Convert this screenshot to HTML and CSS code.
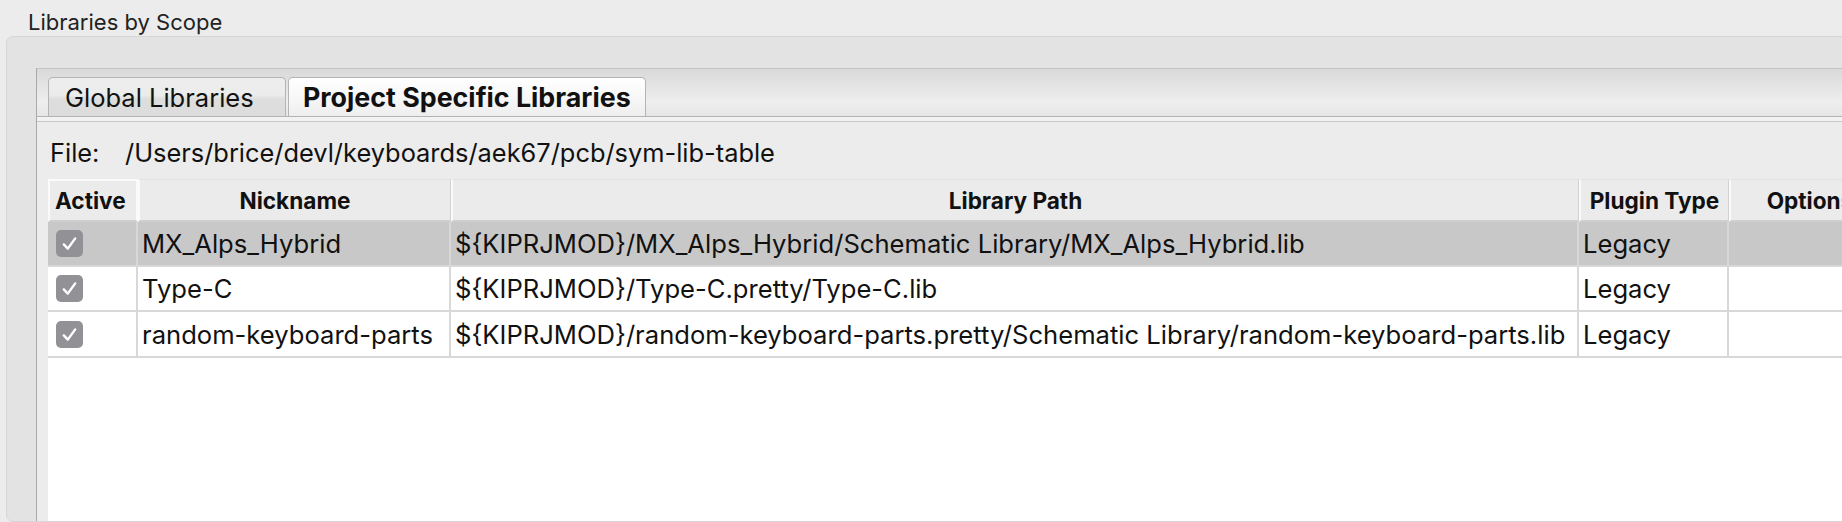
FILE: index.html
```html
<!DOCTYPE html>
<html>
<head>
<meta charset="utf-8">
<link rel="stylesheet" href="styles.css">
</head>
<body>
<div class="window">
  <div class="scope-label">Libraries by Scope</div>
  <div class="groupbox">
    <div class="notebook">
      <div class="tabstrip">
        <div class="tab tab-inactive">Global Libraries</div>
        <div class="tab tab-active">Project Specific Libraries</div>
      </div>
      <div class="tabline"></div>
      <div class="filebar">
        <span class="file-label">File:</span>
        <span class="file-path">/Users/brice/devl/keyboards/aek67/pcb/sym-lib-table</span>
      </div>
      <div class="grid">
        <div class="hcell hcell-active">Active</div>
        <div class="hcell">Nickname</div>
        <div class="hcell">Library Path</div>
        <div class="hcell">Plugin Type</div>
        <div class="hcell hcell-options">Options</div>

        <div class="cell cell-check selected"><span class="checkbox"><svg viewBox="0 0 27 27" width="27" height="27"><path d="M7.8 14.4 L11.8 18.6 L19.2 8.4" fill="none" stroke="#fff" stroke-width="2.4" stroke-linecap="round" stroke-linejoin="round"/></svg></span></div>
        <div class="cell selected">MX_Alps_Hybrid</div>
        <div class="cell selected">${KIPRJMOD}/MX_Alps_Hybrid/Schematic Library/MX_Alps_Hybrid.lib</div>
        <div class="cell selected">Legacy</div>
        <div class="cell selected"></div>

        <div class="cell cell-check"><span class="checkbox"><svg viewBox="0 0 27 27" width="27" height="27"><path d="M7.8 14.4 L11.8 18.6 L19.2 8.4" fill="none" stroke="#fff" stroke-width="2.4" stroke-linecap="round" stroke-linejoin="round"/></svg></span></div>
        <div class="cell">Type-C</div>
        <div class="cell">${KIPRJMOD}/Type-C.pretty/Type-C.lib</div>
        <div class="cell">Legacy</div>
        <div class="cell"></div>

        <div class="cell cell-check"><span class="checkbox"><svg viewBox="0 0 27 27" width="27" height="27"><path d="M7.8 14.4 L11.8 18.6 L19.2 8.4" fill="none" stroke="#fff" stroke-width="2.4" stroke-linecap="round" stroke-linejoin="round"/></svg></span></div>
        <div class="cell">random-keyboard-parts</div>
        <div class="cell">${KIPRJMOD}/random-keyboard-parts.pretty/Schematic Library/random-keyboard-parts.lib</div>
        <div class="cell">Legacy</div>
        <div class="cell"></div>
      </div>
    </div>
  </div>
</div>
</body>
</html>
```
FILE: styles.css
```css
html, body {
  margin: 0;
  padding: 0;
}
body {
  background: #ececec;
  font-family: Inter, "Liberation Sans", sans-serif;
  color: #111;
}
.window {
  width: 1842px;
  height: 522px;
  overflow: hidden;
  display: flex;
  flex-direction: column;
}
.scope-label {
  height: 36px;
  box-sizing: border-box;
  padding: 8px 0 0 28px;
  font-size: 22px;
  line-height: 28px;
  color: #222;
}
.groupbox {
  flex: 1;
  margin-left: 6px;
  width: 1900px;
  box-sizing: border-box;
  border: 1px solid #d6d6d6;
  border-radius: 7px;
  background: #e3e3e3;
  padding: 31px 0 0 29px;
  display: flex;
  flex-direction: column;
}
.notebook {
  flex: 1;
  border-left: 1px solid #a9a9a9;
  border-top: 1px solid #c4c4c4;
  background: #ececec;
  display: flex;
  flex-direction: column;
}
.tabstrip {
  height: 47px;
  box-sizing: border-box;
  background: linear-gradient(#d9d9d9, #eeeeee 70%, #e6e6e6);
  display: flex;
  align-items: flex-end;
  padding-left: 11px;
}
.tab {
  box-sizing: border-box;
  border: 1px solid #b4b4b4;
  border-bottom: none;
  border-radius: 5px 5px 0 0;
  display: flex;
  align-items: center;
  color: #111;
}
.tab-inactive {
  width: 238px;
  height: 39px;
  padding-left: 16px;
  font-size: 25.5px;
  background: linear-gradient(#ededed 0%, #ececec 45%, #dedede 55%, #dcdcdc 100%);
}
.tab-active {
  width: 358px;
  height: 39px;
  margin-left: 2px;
  padding-left: 14px;
  font-size: 26.8px;
  font-weight: 700;
  background: linear-gradient(#ffffff, #f6f6f6 60%, #eeeeee);
}
.tabline {
  height: 6px;
  box-sizing: border-box;
  border-top: 1px solid #b4b4b4;
  border-bottom: 1px solid #c8c8c8;
  background: #f2f2f2;
}
.filebar {
  height: 57px;
  display: flex;
  align-items: center;
  padding: 3px 0 0 13px;
  box-sizing: border-box;
  font-size: 25.4px;
  color: #111;
}
.file-label {
  width: 75px;
}
.grid {
  flex: 1;
  margin-left: 11px;
  background: #fff;
  display: grid;
  grid-template-columns: 90px 313px 1128px 150px 161px;
  grid-template-rows: 43px 45px 45px 46px;
  align-content: start;
}
.hcell {
  box-sizing: border-box;
  background: #ebebeb;
  border-left: 2px solid #fafafa;
  border-right: 1px solid #d2d2d2;
  border-top: 1px solid #e2e2e2;
  border-bottom: 2px solid #cfcfcf;
  font-size: 22.6px;
  font-weight: 700;
  display: flex;
  align-items: center;
  justify-content: center;
  white-space: nowrap;
  color: #111;
}
.hcell-active {
  justify-content: flex-start;
  padding-left: 5px;
  border: 2px solid #fafafa;
  border-bottom: 2px solid #cfcfcf;
}
.cell {
  box-sizing: border-box;
  border-right: 2px solid #d8d8d8;
  border-bottom: 2px solid #d8d8d8;
  font-size: 25.6px;
  display: flex;
  align-items: center;
  padding-left: 4px;
  white-space: nowrap;
  overflow: hidden;
  color: #111;
}
.cell.selected {
  background: #c8c8c8;
}
.cell-check {
  padding-left: 8px;
}
.checkbox {
  flex: none;
  width: 27px;
  height: 27px;
  border-radius: 5px;
  background: #929296;
  display: flex;
}
```
